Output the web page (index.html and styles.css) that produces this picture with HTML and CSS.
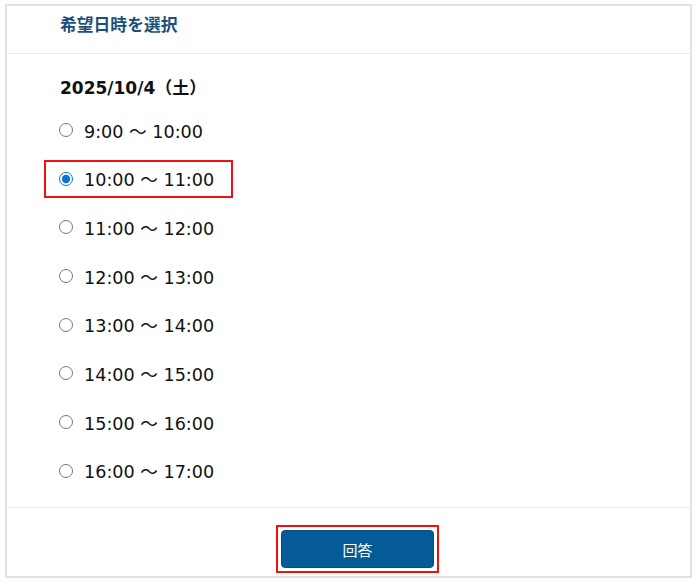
FILE: index.html
```html
<!DOCTYPE html>
<html lang="ja">
<head>
<meta charset="utf-8">
<title>希望日時を選択</title>
<link rel="stylesheet" href="styles.css">
</head>
<body>
<div class="card">
  <div class="card-header">
    <h2 class="title">希望日時を選択</h2>
  </div>
  <div class="card-body">
    <div class="date">2025/10/4（土）</div>
    <div class="slots">
      <label class="slot"><input type="radio" name="slot"><span>9:00 ～ 10:00</span></label>
      <label class="slot selected"><input type="radio" name="slot" checked><span>10:00 ～ 11:00</span></label>
      <label class="slot"><input type="radio" name="slot"><span>11:00 ～ 12:00</span></label>
      <label class="slot"><input type="radio" name="slot"><span>12:00 ～ 13:00</span></label>
      <label class="slot"><input type="radio" name="slot"><span>13:00 ～ 14:00</span></label>
      <label class="slot"><input type="radio" name="slot"><span>14:00 ～ 15:00</span></label>
      <label class="slot"><input type="radio" name="slot"><span>15:00 ～ 16:00</span></label>
      <label class="slot"><input type="radio" name="slot"><span>16:00 ～ 17:00</span></label>
    </div>
  </div>
  <div class="card-footer">
    <div class="highlight">
      <button class="submit" type="button">回答</button>
    </div>
  </div>
</div>
</body>
</html>
```
FILE: styles.css
```css
html, body {
  margin: 0;
  padding: 0;
  background: #ffffff;
}

body {
  font-family: "DejaVu Sans", "Noto Sans CJK JP", sans-serif;
  color: #111111;
  padding: 4px 0 0 5px;
}

.card {
  box-sizing: border-box;
  width: 687px;
  height: 574px;
  border: 2px solid #e3e3e3;
  display: flex;
  flex-direction: column;
}

.card-header {
  box-sizing: border-box;
  height: 48px;
  padding: 6px 0 0 53px;
  border-bottom: 1px solid #ececec;
}

.title {
  margin: 0;
  font-size: 16.8px;
  line-height: 24px;
  font-weight: bold;
  color: #1b4f7b;
  font-family: "Noto Sans CJK JP", sans-serif;
}

.card-body {
  flex: 1;
  box-sizing: border-box;
  padding: 22px 0 0 53px;
  border-bottom: 1px solid #ececec;
}

.date {
  font-size: 17px;
  line-height: 24px;
  font-weight: bold;
  color: #111111;
}

.slots {
  display: flex;
  flex-direction: column;
  align-items: flex-start;
  gap: 10.7px;
  margin-top: 11px;
  margin-left: -16px;
}

.slot {
  box-sizing: border-box;
  height: 38px;
  display: inline-flex;
  align-items: center;
  padding: 0 17px 0 12px;
  border: 2px solid transparent;
  font-size: 17.6px;
  color: #111111;
  cursor: pointer;
}

.slot.selected {
  border-color: #ee1111;
}

.slot input {
  margin: 0 11px 0 1px;
  width: 14px;
  height: 14px;
  accent-color: #0b74d6;
}

.card-footer {
  height: 68px;
  display: flex;
  justify-content: center;
  align-items: flex-start;
  padding: 17px 0 0 18px;
  box-sizing: border-box;
}

.highlight {
  border: 2px solid #ee1111;
  padding: 3px;
  display: flex;
}

.submit {
  width: 153px;
  height: 38px;
  background: #055b97;
  color: #ffffff;
  border: 1px solid #0a4e80;
  border-radius: 4px;
  font-family: "Noto Sans CJK JP", sans-serif;
  font-size: 15px;
  cursor: pointer;
}
```
